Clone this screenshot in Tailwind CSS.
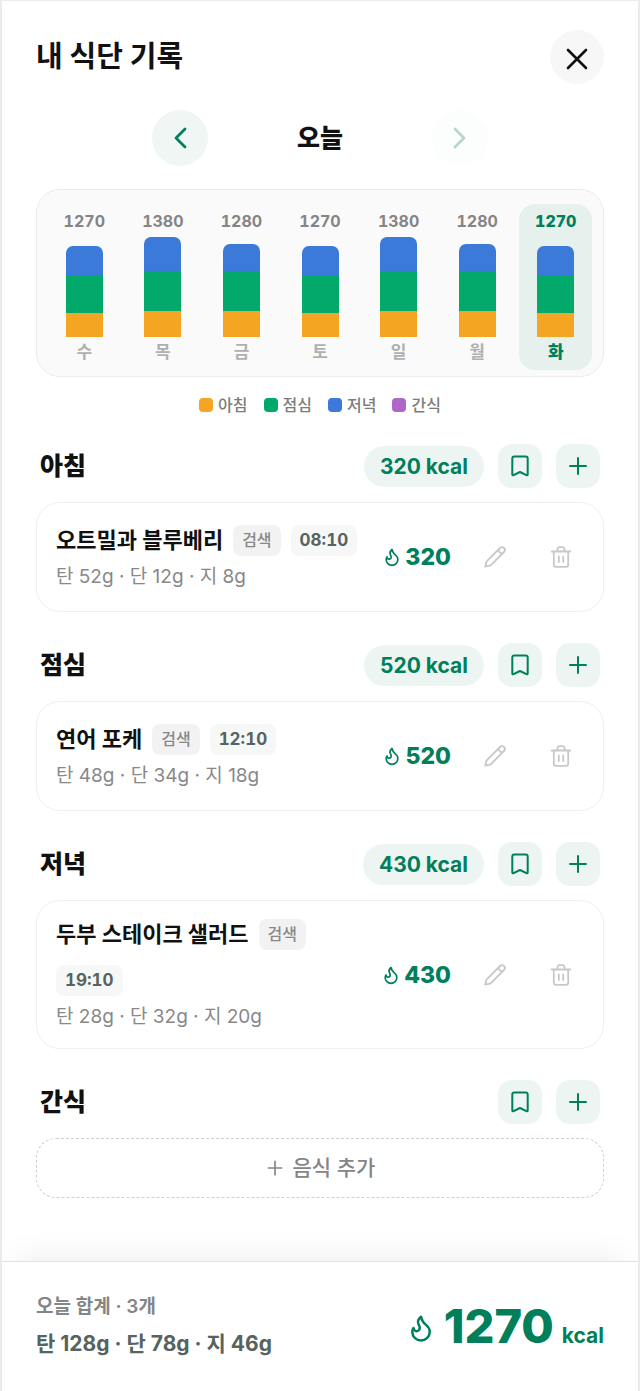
<!DOCTYPE html>
<html lang="ko">
<head>
  <meta charset="UTF-8">
  <meta name="viewport" content="width=device-width, initial-scale=1">
  <title>내 식단 기록</title>
  <script src="https://cdn.jsdelivr.net/npm/@tailwindcss/browser@4"></script>
</head>
<body class="min-h-screen flex flex-col bg-white border-x-2 border-t border-[#ebebeb] text-[#111] font-['Inter','Noto_Sans_CJK_KR',sans-serif]">

  <!-- icons -->
  <svg class="hidden">
    <symbol id="flame" viewBox="0 0 24 24"><path d="M8.5 14.5A2.5 2.5 0 0 0 11 12c0-1.38-.5-2-1-3-1.072-2.143-.224-4.054 2-6 .5 2.5 2 4.9 4 6.5 2 1.6 3 3.5 3 5.5a7 7 0 1 1-14 0c0-1.153.433-2.294 1-3a2.5 2.5 0 0 0 2.5 2.5z"/></symbol>
    <symbol id="bookmark" viewBox="0 0 24 24"><path d="M6.3 2.5h11.400a2 2 0 0 1 2 2v15.900a.9.9 0 0 1-1.300.8L12 18l-6.400 3.200a.9.9 0 0 1-1.300-.8V4.500a2 2 0 0 1 2-2z"/></symbol>
    <symbol id="plus" viewBox="0 0 24 24"><path d="M12 4v16M4 12h16"/></symbol>
    <symbol id="pencil" viewBox="0 0 24 24"><path d="M2.3 21.7l1-4.6a2 2 0 0 1 .6-1L17 3a2.8 2.8 0 0 1 4 4L7.900 20.100a2 2 0 0 1-1 .6zM15.800 4.200a3.400 3.400 0 0 0 4 4"/></symbol>
    <symbol id="trash" viewBox="0 0 24 24"><path d="M2.700 6.500h18.600M4.800 6.500v13.300a2 2 0 0 0 2 2h10.400a2 2 0 0 0 2-2V6.500M8 6.500l.8-3.200a1.500 1.500 0 0 1 1.400-1.100h3.600a1.500 1.500 0 0 1 1.400 1.100l.8 3.200M9.800 11.500v5.500M14.200 11.500v5.500"/></symbol>
  </svg>

  <main class="flex-1 px-[34px] pt-[29px] pb-[61px]">
    <header class="flex items-center justify-between">
      <h1 class="text-[29px] leading-[40px] font-bold">내 식단 기록</h1>
      <button aria-label="닫기" class="size-[54px] rounded-full bg-[#f7f7f7] flex items-center justify-center">
        <svg viewBox="0 0 24 24" class="size-6 mt-1 fill-none stroke-current stroke-[2.6] [stroke-linecap:round]"><path d="M3 3l18 18M21 3L3 21"/></svg>
      </button>
    </header>

    <nav class="mt-[26px] flex items-center justify-center">
      <button aria-label="이전 날" class="size-14 rounded-full bg-[#eff6f4] text-[#007f5a] flex items-center justify-center">
        <svg viewBox="0 0 24 24" class="size-6 fill-none stroke-current stroke-[2.8] [stroke-linecap:round] [stroke-linejoin:round]"><path d="M17 3l-9 9 9 9"/></svg>
      </button>
      <h2 class="w-[224px] text-center text-[25px] leading-[36px] font-extrabold">오늘</h2>
      <button aria-label="다음 날" disabled class="size-14 rounded-full bg-[#fcfefd] text-[#b3d7cc] flex items-center justify-center">
        <svg viewBox="0 0 24 24" class="size-6 fill-none stroke-current stroke-[2.8] [stroke-linecap:round] [stroke-linejoin:round]"><path d="M7 3l9 9-9 9"/></svg>
      </button>
    </nav>

    <section id="weekChart" aria-label="주간 칼로리" class="mt-[23px] flex gap-[6px] rounded-3xl border border-[#ececec] bg-[#fafafa] px-[11px] pt-[14px] pb-[6px]"></section>

    <ul class="mt-[18px] flex justify-center gap-4 text-[16px] leading-5 font-medium text-[#7c7c7c]">
      <li class="flex items-center gap-[5px]"><span class="size-[14px] rounded-[4px] bg-[#f4a623]"></span>아침</li>
      <li class="flex items-center gap-[5px]"><span class="size-[14px] rounded-[4px] bg-[#03a86b]"></span>점심</li>
      <li class="flex items-center gap-[5px]"><span class="size-[14px] rounded-[4px] bg-[#3b7ad9]"></span>저녁</li>
      <li class="flex items-center gap-[5px]"><span class="size-[14px] rounded-[4px] bg-[#ae67c8]"></span>간식</li>
    </ul>

    <div id="meals" class="mt-[29px] flex flex-col gap-[31px]"></div>
  </main>

  <footer class="flex items-center justify-between px-[34px] pt-7 pb-[30px] border-t border-[#d3e9e2] bg-white shadow-[0_-18px_30px_-14px_rgba(0,0,0,0.07)]">
    <div>
      <p class="text-[19px] leading-[34px] font-semibold text-[#858585]">오늘 합계 · 3개</p>
      <p class="mt-[3px] text-[21px] leading-[34px] font-bold text-[#56635f]">탄 128g · 단 78g · 지 46g</p>
    </div>
    <p class="flex items-baseline text-[#007f5a]">
      <svg class="size-[30px] mr-2 self-center mt-1 fill-none stroke-current stroke-2 [stroke-linecap:round] [stroke-linejoin:round]"><use href="#flame"/></svg>
      <span class="text-[47px] leading-[56px] font-extrabold">1270</span>
      <span class="ml-2 text-[21px] font-bold">kcal</span>
    </p>
  </footer>

  <script>
    // bar parts are in px: breakfast, lunch, dinner
    const week = [
      { day: '수', kcal: 1270, parts: [24, 37, 30] },
      { day: '목', kcal: 1380, parts: [26, 40, 34] },
      { day: '금', kcal: 1280, parts: [26, 40, 27] },
      { day: '토', kcal: 1270, parts: [24, 37, 30] },
      { day: '일', kcal: 1380, parts: [26, 40, 34] },
      { day: '월', kcal: 1280, parts: [26, 40, 27] },
      { day: '화', kcal: 1270, parts: [24, 37, 30], today: true }
    ];

    const meals = [
      { title: '아침', kcal: 320, item: { name: '오트밀과 블루베리', time: '08:10', macro: '탄 52g · 단 12g · 지 8g' } },
      { title: '점심', kcal: 520, item: { name: '연어 포케', time: '12:10', macro: '탄 48g · 단 34g · 지 18g' } },
      { title: '저녁', kcal: 430, item: { name: '두부 스테이크 샐러드', time: '19:10', macro: '탄 28g · 단 32g · 지 20g' } },
      { title: '간식' }
    ];

    document.getElementById('weekChart').innerHTML = week.map((d) => `
      <div class="flex-1 flex flex-col items-center rounded-2xl py-2 ${d.today ? 'bg-[#e6f0ed]' : ''}">
        <span class="text-[16px] leading-[18px] tabular-nums ${d.today ? 'font-extrabold text-[#007f5a]' : 'font-bold text-[#858585]'}">${d.kcal}</span>
        <div class="h-[107px] flex flex-col justify-end">
          <div class="w-[37px] rounded-t-[7px] overflow-hidden">
            <div class="bg-[#3b7ad9]" style="height: ${d.parts[2]}px"></div>
            <div class="bg-[#03a86b]" style="height: ${d.parts[1]}px"></div>
            <div class="bg-[#f4a623]" style="height: ${d.parts[0]}px"></div>
          </div>
        </div>
        <span class="mt-[5px] text-[17px] leading-5 ${d.today ? 'font-extrabold text-[#007f5a]' : 'font-semibold text-[#b0b0b0]'}">${d.day}</span>
      </div>
    `).join('');

    function itemCard(meal) {
      const item = meal.item;
      return `
        <article class="mt-[14px] min-h-[110px] flex items-center gap-[22px] rounded-3xl border border-[#f0f0f0] py-[18px] pl-[19px] pr-5">
          <div class="flex-1">
            <div class="flex flex-wrap items-center gap-x-[10px] gap-y-[15px]">
              <h4 class="text-[22px] leading-[31px] font-bold">${item.name}</h4>
              <span class="rounded-lg bg-[#f2f2f2] px-[9px] text-[16px] leading-[31px] font-medium text-[#888]">검색</span>
              <span class="rounded-lg bg-[#f6f7f7] px-[9px] text-[17px] leading-[31px] font-bold tabular-nums text-[#56635f]">${item.time}</span>
            </div>
            <p class="mt-[7px] text-[19px] leading-[27px] text-[#888]">${item.macro}</p>
          </div>
          <p class="flex items-center gap-[3px] text-[23px] leading-8 font-extrabold text-[#007f5a]">
            <svg class="size-5 fill-none stroke-current stroke-2 [stroke-linecap:round] [stroke-linejoin:round]"><use href="#flame"/></svg>${meal.kcal}
          </p>
          <button aria-label="수정" class="size-11 flex items-center justify-center text-[#c8c8c8]">
            <svg class="size-6 fill-none stroke-current stroke-[1.8] [stroke-linecap:round] [stroke-linejoin:round]"><use href="#pencil"/></svg>
          </button>
          <button aria-label="삭제" class="size-11 flex items-center justify-center text-[#c8c8c8]">
            <svg class="size-6 fill-none stroke-current stroke-[1.8] [stroke-linecap:round] [stroke-linejoin:round]"><use href="#trash"/></svg>
          </button>
        </article>`;
    }

    const emptyCard = `
      <button class="mt-[14px] w-full h-[60px] flex items-center justify-center gap-2 rounded-[20px] border border-dashed border-[#cfcfcf] text-[21px] leading-8 font-medium text-[#858585]">
        <svg class="size-5 fill-none stroke-current stroke-2 [stroke-linecap:round]"><use href="#plus"/></svg>음식 추가
      </button>`;

    document.getElementById('meals').innerHTML = meals.map((m) => `
      <section>
        <div class="flex items-center gap-[14px] px-1">
          <h3 class="mr-auto text-[25px] leading-9 font-extrabold">${m.title}</h3>
          ${m.kcal ? `<span class="rounded-full bg-[#edf5f3] px-4 text-[21px] leading-[41px] font-bold text-[#007f5a]">${m.kcal} kcal</span>` : ''}
          <button aria-label="${m.title} 즐겨찾기" class="size-11 rounded-[14px] bg-[#edf5f3] text-[#007f5a] flex items-center justify-center">
            <svg class="size-6 fill-none stroke-current stroke-2 [stroke-linecap:round] [stroke-linejoin:round]"><use href="#bookmark"/></svg>
          </button>
          <button aria-label="${m.title} 추가" class="size-11 rounded-[14px] bg-[#edf5f3] text-[#007f5a] flex items-center justify-center">
            <svg class="size-6 fill-none stroke-current stroke-2 [stroke-linecap:round]"><use href="#plus"/></svg>
          </button>
        </div>
        ${m.item ? itemCard(m) : emptyCard}
      </section>
    `).join('');
  </script>
</body>
</html>
